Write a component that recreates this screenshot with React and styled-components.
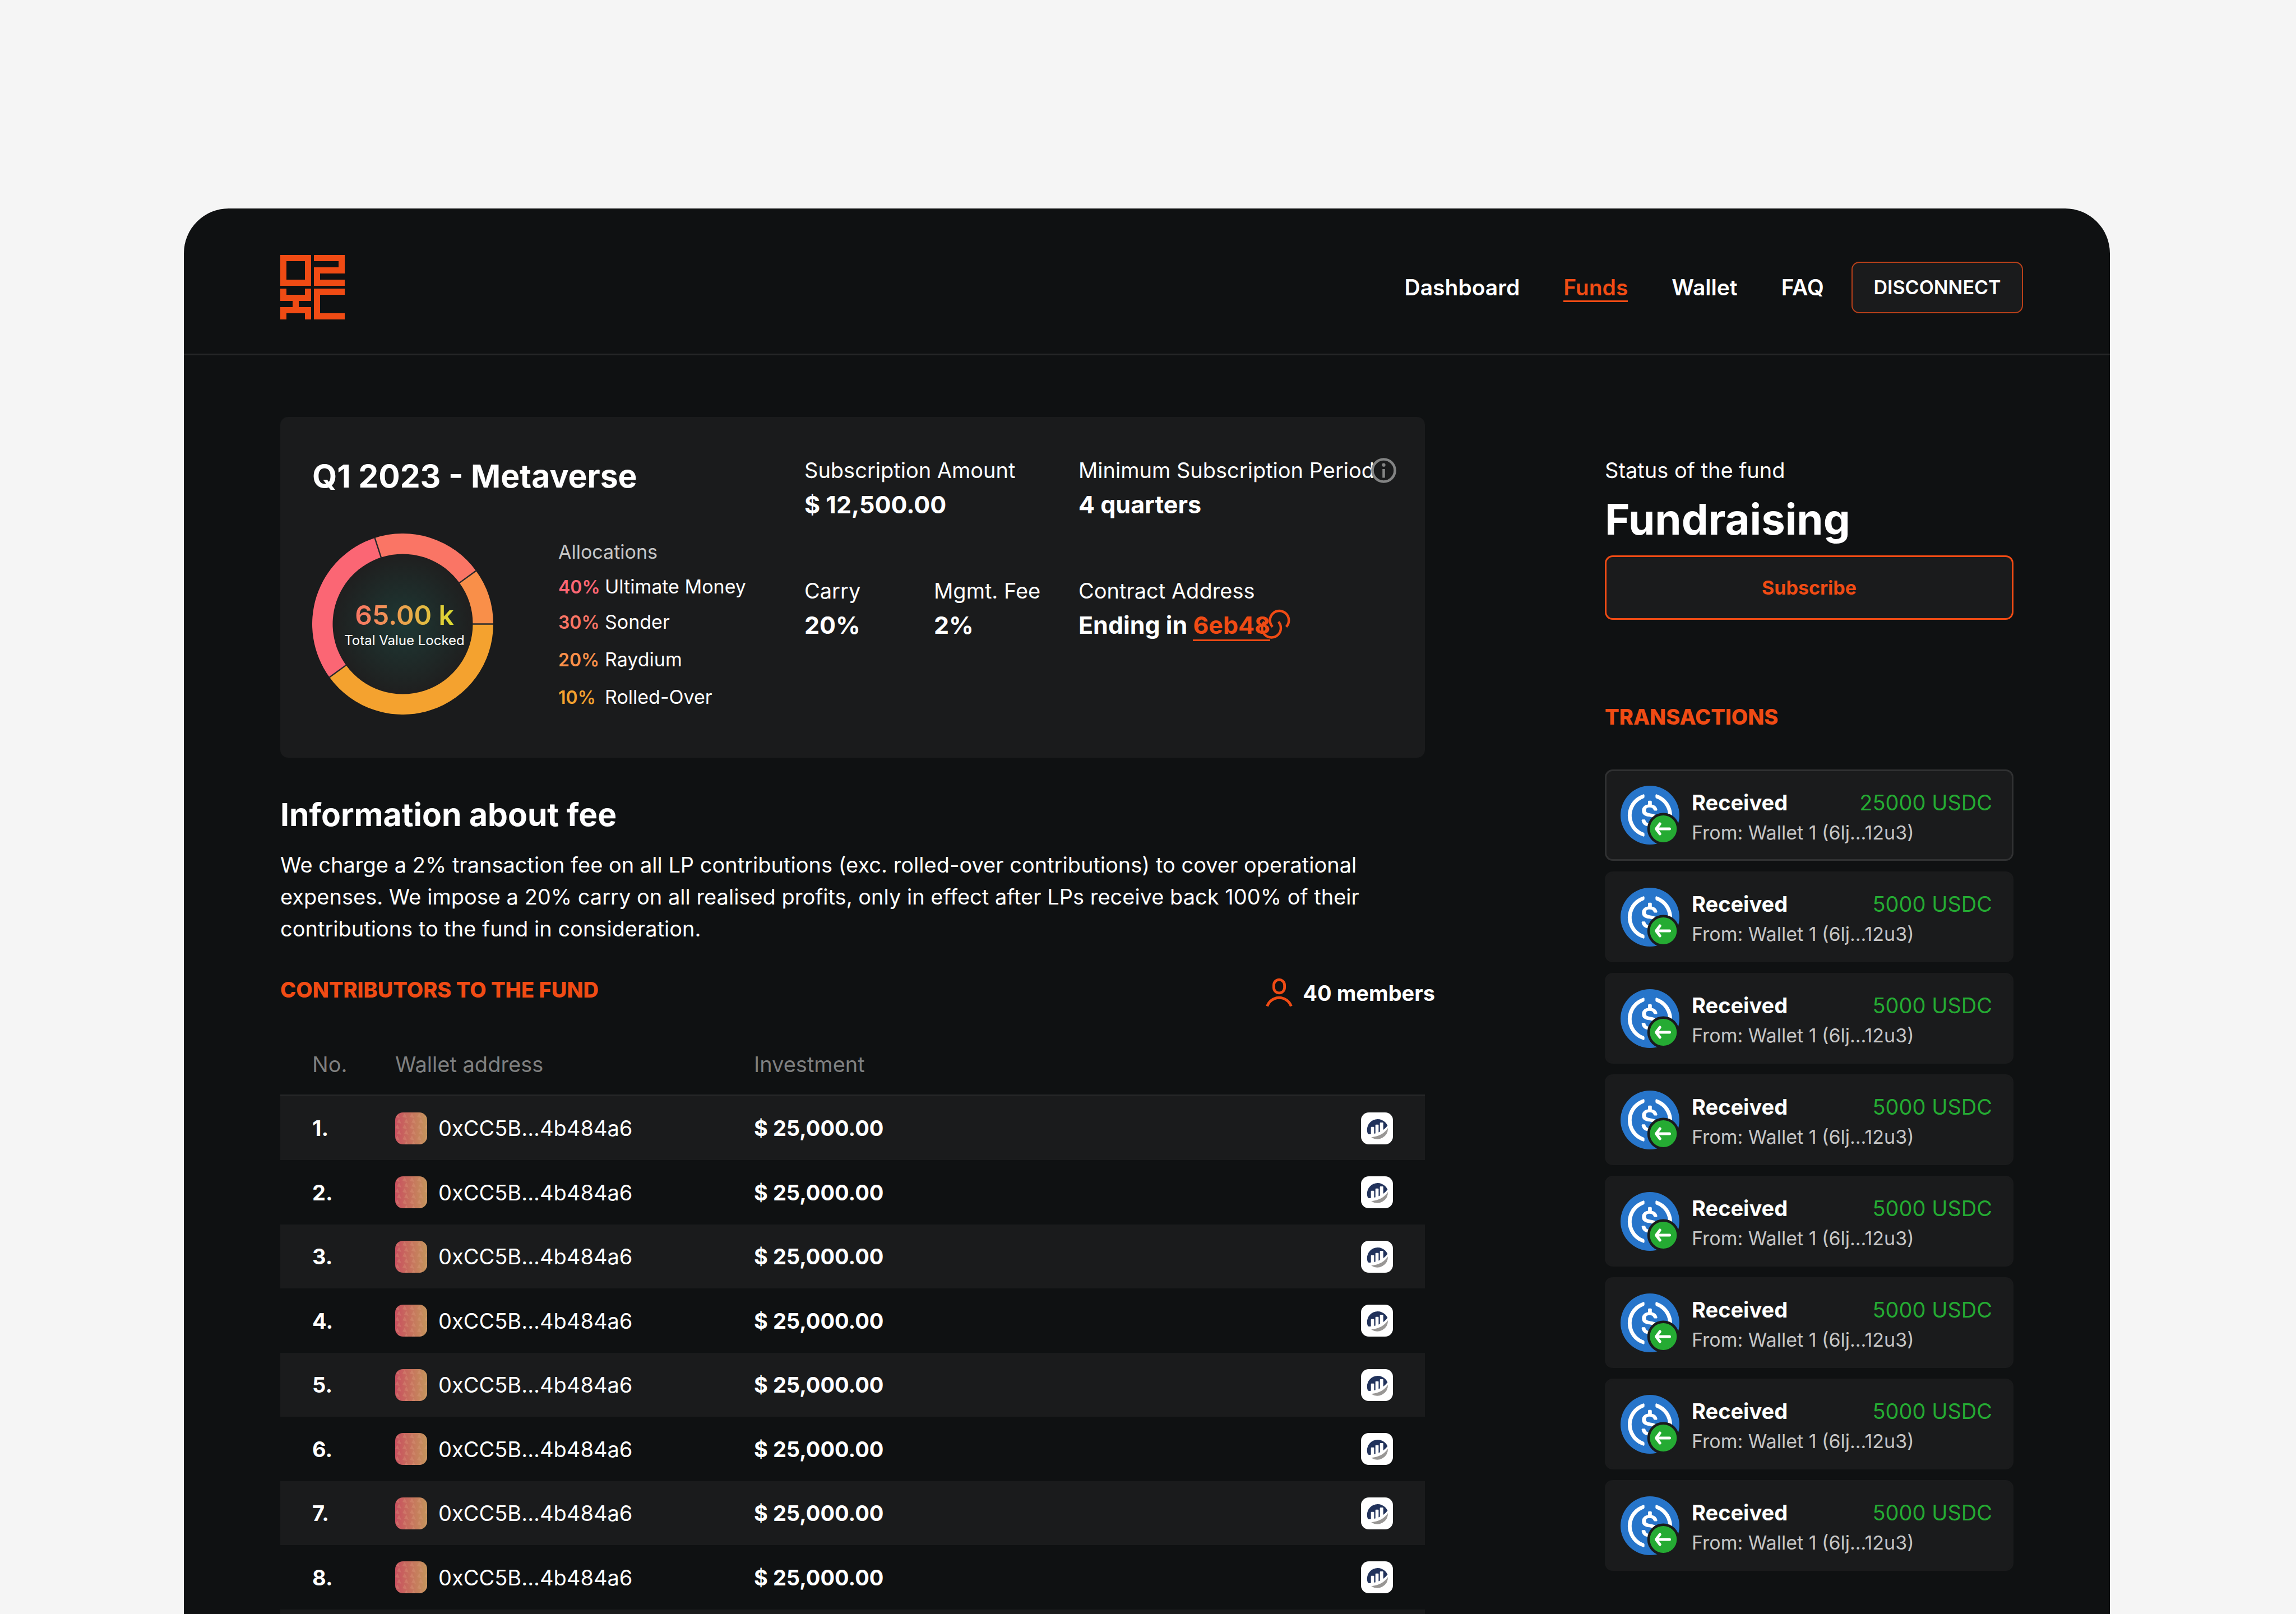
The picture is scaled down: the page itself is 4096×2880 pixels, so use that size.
import React from "react";
import styled, { createGlobalStyle, css } from "styled-components";

const color = {
  page: "#f5f5f5",
  base: "#0f1112",
  surface: "#1a1b1c",
  line: "#252627",
  outline: "#303132",
  accent: "#f04b14",
  text: "#ffffff",
  soft: "#c6c6c6",
  muted: "#7f8080",
  green: "#25ab33",
};

const GlobalStyle = createGlobalStyle`
  *, *::before, *::after { box-sizing: border-box; }
  body { margin: 0; background: ${color.page}; }
  h1, h2, h3, p, ul, dl, dd { margin: 0; padding: 0; }
  ul { list-style: none; }
`;

const Page = styled.div`
  height: 100vh;
  overflow: hidden;
  padding: 372px 332px 0 328px;
  background: ${color.page};
  color: ${color.text};
  font-family: Inter, "Liberation Sans", sans-serif;
  font-size: 38px;
  line-height: 46px;
`;

const Window = styled.div`
  min-height: 100vh;
  background: ${color.base};
  border-radius: 80px 80px 0 0;
`;

const Header = styled.header`
  display: flex;
  align-items: center;
  justify-content: space-between;
  padding: 83px 155px 61px 172px;
  border-bottom: 3px solid ${color.line};
`;

const LogoLink = styled.a`
  display: block;
  width: 115px;
  height: 115px;
`;

const HeaderActions = styled.div`
  display: flex;
  align-items: center;
  gap: 49px;
`;

const Nav = styled.nav`
  display: flex;
  gap: 78px;
`;

const NavLink = styled.a`
  font-size: 39px;
  font-weight: 600;
  line-height: 46px;
  color: ${(p) => (p.$active ? color.accent : color.text)};
  text-decoration: none;
  border-bottom: 3px solid ${(p) => (p.$active ? color.accent : "transparent")};
  border-top: 3px solid transparent;
`;

const buttonBase = css`
  font-family: inherit;
  font-size: 34px;
  line-height: 46px;
  background: ${color.surface};
  border-radius: 14px;
  cursor: pointer;
`;

const DisconnectButton = styled.button`
  ${buttonBase}
  min-width: 306px;
  height: 92px;
  padding: 0 36px;
  border: 2px solid #b8401a;
  font-weight: 600;
  color: ${color.text};
`;

const SubscribeButton = styled.button`
  ${buttonBase}
  width: 100%;
  height: 115px;
  margin-top: 19px;
  border: 3px solid ${color.accent};
  font-weight: 700;
  color: ${color.accent};
`;

const Main = styled.main`
  display: grid;
  grid-template-columns: minmax(0, 2042fr) minmax(0, 729fr);
  column-gap: 321px;
  padding: 110px 172px;
`;

const FundCard = styled.section`
  display: flex;
  padding: 71px 57px 77px;
  border-radius: 14px;
  background: ${color.surface};
`;

const Summary = styled.div`
  flex: 0 0 878px;
`;

const Heading = styled.h2`
  font-size: 57px;
  line-height: 69px;
  font-weight: 700;
`;

const ChartRow = styled.div`
  display: flex;
  gap: 116px;
  margin-top: 68px;
`;

const Donut = styled.figure`
  display: grid;
  place-items: center;
  width: 323px;
  height: 323px;
  margin: 0;
  & > * { grid-area: 1 / 1; }
`;

const DonutLabel = styled.figcaption`
  display: flex;
  flex-direction: column;
  align-items: center;
  padding: 8px 0 0 6px;
  white-space: nowrap;
`;

const DonutValue = styled.strong`
  font-size: 48px;
  line-height: 50px;
  font-weight: 600;
  color: transparent;
  background: linear-gradient(90deg, #fa7565 0%, #e8a84a 55%, #dcdc32 100%);
  background-clip: text;
  -webkit-background-clip: text;
`;

const DonutNote = styled.span`
  font-size: 24px;
  line-height: 40px;
`;

const Allocations = styled.div`
  padding-top: 10px;
  font-size: 34px;
`;

const AllocationsTitle = styled.h3`
  font-size: 34px;
  line-height: 46px;
  font-weight: 400;
  color: ${color.soft};
`;

const AllocationItem = styled.li`
  display: grid;
  grid-template-columns: 83px auto;
  align-items: baseline;
  margin-top: 16px;
  & + & + & { margin-top: 20px; }
`;

const Percent = styled.b`
  font-size: 32px;
  font-weight: 600;
  color: ${(p) => p.$tint};
`;

const Stats = styled.dl`
  flex: 1;
  display: grid;
  grid-template-columns: 231px 258px 1fr;
  align-content: start;
  row-gap: 101px;
`;

const Stat = styled.div`
  position: relative;
  grid-column: span ${(p) => p.$span || 1};
  display: flex;
  flex-direction: column;
  gap: 9px;
  white-space: nowrap;
`;

const StatLabel = styled.dt`
  line-height: 48px;
`;

const StatValue = styled.dd`
  font-size: 43px;
  line-height: 57px;
  font-weight: 700;
`;

const InfoButton = styled.button`
  position: absolute;
  top: 2px;
  left: 522px;
  display: block;
  width: 45px;
  height: 45px;
  padding: 0;
  border: 0;
  background: none;
`;

const AddressLink = styled.a`
  display: inline-block;
  line-height: 52px;
  color: ${color.accent};
  text-decoration: none;
  border-bottom: 3px solid ${color.accent};
`;

const ChainIcon = styled.svg`
  position: absolute;
  top: 57px;
  left: 325px;
  width: 54px;
  height: 54px;
`;

const FeeInfo = styled.section`
  margin-top: 67px;
`;

const FeeText = styled.p`
  margin-top: 27px;
  max-width: 1960px;
  line-height: 57px;
`;

const SectionBar = styled.div`
  display: flex;
  align-items: flex-start;
  justify-content: space-between;
  margin-top: 57px;
`;

const SectionTitle = styled.h2`
  font-size: 38px;
  line-height: 46px;
  font-weight: 800;
  color: ${color.accent};
`;

const Members = styled.p`
  display: flex;
  align-items: center;
  gap: 14px;
  height: 57px;
  margin-right: -18px;
  font-weight: 700;
`;

const Table = styled.table`
  width: 100%;
  margin-top: 45px;
  border-spacing: 0;
  table-layout: fixed;
`;

const Th = styled.th`
  height: 111px;
  padding: 0 0 0 ${(p) => (p.$first ? "57px" : "0")};
  border-bottom: 3px solid ${color.line};
  font-weight: 400;
  text-align: left;
  color: ${color.muted};
  width: ${(p) => p.$width || "auto"};
`;

const Row = styled.tr`
  height: 115px;
  &:nth-child(odd) {
    height: 114px;
    background: ${color.surface};
  }
`;

const Td = styled.td`
  padding: 0;
  font-weight: ${(p) => (p.$bold ? 700 : 400)};
  &:first-child { padding-left: 57px; }
  &:last-child { padding-right: 57px; }
`;

const Wallet = styled.span`
  display: flex;
  align-items: center;
  gap: 20px;
`;

const WalletTile = styled.svg`
  width: 57px;
  height: 57px;
  border-radius: 14px;
  background: linear-gradient(90deg, #c9505f, #c4955c);
`;

const ExplorerLink = styled.a`
  display: block;
  width: 57px;
  height: 57px;
  margin-left: auto;
  border-radius: 14px;
  background: #ffffff;
`;

const Aside = styled.aside`
  padding-top: 71px;
`;

const StatusLabel = styled.p`
  line-height: 48px;
`;

const Status = styled.h1`
  margin-top: 17px;
  font-size: 76px;
  line-height: 92px;
  font-weight: 700;
`;

const TransactionsTitle = styled(SectionTitle)`
  margin-top: 150px;
`;

const TransactionList = styled.ul`
  display: flex;
  flex-direction: column;
  gap: 19px;
  margin-top: 71px;
`;

const Transaction = styled.li`
  display: flex;
  align-items: center;
  gap: 22px;
  height: ${(p) => (p.$selected ? "163px" : "162px")};
  padding: 0 35px 0 25px;
  border: 3px solid ${(p) => (p.$selected ? color.outline : color.surface)};
  border-radius: 14px;
  background: ${color.surface};
`;

const TransactionBody = styled.div`
  flex: 1;
  display: grid;
  row-gap: 8px;
  padding-top: 8px;
`;

const TransactionTop = styled.div`
  display: flex;
  justify-content: space-between;
`;

const Kind = styled.b`
  font-weight: 700;
`;

const Amount = styled.span`
  color: ${color.green};
`;

const From = styled.p`
  font-size: 34px;
  color: ${color.soft};
`;

const Logo = () => (
  <svg viewBox="0 0 115 115" width="115" height="115" fill={color.accent} aria-hidden="true">
    <path fillRule="evenodd" d="M0 0H55V55H0ZM11 11V44H44V11Z" />
    <path d="M60 0H115V33H71V44H115V55H60V22H104V11H60Z" />
    <path d="M0 60H11V71H44V60H55V82H33V93H55V115H44V104H11V115H0V93H22V82H0Z" />
    <path d="M60 60H115V71H71V104H115V115H60Z" />
  </svg>
);

const point = (deg, r) => {
  const a = (deg * Math.PI) / 180;
  return `${(161.5 + r * Math.cos(a)).toFixed(2)} ${(161.5 + r * Math.sin(a)).toFixed(2)}`;
};

const ringSlice = (from, to) => {
  const large = to - from > 180 ? 1 : 0;
  return `M${point(from, 161.5)}A161.5 161.5 0 ${large} 1 ${point(to, 161.5)}L${point(to, 125)}A125 125 0 ${large} 0 ${point(from, 125)}Z`;
};

const slices = [
  { from: 0, to: 144, fill: "#f4a22f" },
  { from: 144, to: 252, fill: "#fb6674" },
  { from: 252, to: 324, fill: "#fa7565" },
  { from: 324, to: 360, fill: "#f98f49" },
];

const DonutChart = () => (
  <svg viewBox="0 0 323 323" width="323" height="323" aria-hidden="true">
    <defs>
      <radialGradient id="donut-glow">
        <stop offset="0" stopColor="#1e3834" />
        <stop offset="1" stopColor="#1f1f1f" />
      </radialGradient>
    </defs>
    <circle cx="161.5" cy="161.5" r="125" fill="url(#donut-glow)" />
    {slices.map((s) => (
      <path key={s.from} d={ringSlice(s.from, s.to)} fill={s.fill} />
    ))}
    {slices.map((s) => (
      <path key={s.from} d={`M${point(s.from, 124)}L${point(s.from, 162)}`} stroke="#26282c" strokeWidth="2.4" />
    ))}
  </svg>
);

const InfoIcon = () => (
  <svg viewBox="0 0 45 45" width="45" height="45" fill="none" stroke="#838484" strokeWidth="4.6" style={{ display: "block" }}>
    <circle cx="22.5" cy="22.5" r="20" />
    <path d="M22.5 20V35.5" />
    <circle cx="22.5" cy="12.7" r="3.1" fill="#838484" stroke="none" />
  </svg>
);

const PersonIcon = () => (
  <svg viewBox="0 0 57 57" width="57" height="57" fill="none" stroke={color.accent} strokeWidth="4.8" aria-hidden="true">
    <rect x="19.4" y="5.2" width="19.2" height="23.7" rx="9.6" />
    <path d="M7.6 52.6A22.6 22.6 0 0 1 50.4 52.6" />
  </svg>
);

const wedges = [];
for (let r = 0; r < 6; r += 1) {
  for (let c = 0; c < 5; c += 1) {
    wedges.push(`M${c * 13 + (r % 2) * 3} ${r * 10 + 8}l4 -7l4 9z`);
  }
}

const Tile = () => (
  <WalletTile viewBox="0 0 57 57" aria-hidden="true">
    <path d={wedges.join("")} fill="#e0a080" fillOpacity="0.3" />
  </WalletTile>
);

const ExplorerIcon = () => (
  <svg viewBox="0 0 57 57" width="57" height="57" style={{ display: "block" }} aria-hidden="true">
    <path d="M12.3 38.6A19 19 0 1 1 47.4 23.6Q37 37.5 15.5 39Z" fill="#21325b" />
    <path d="M17.7 26.7a1 1 0 0 1 1-1h3.7a1 1 0 0 1 1 1V40H17.7ZM25.7 22.7a1 1 0 0 1 1-1h3.7a1 1 0 0 1 1 1V38H25.7ZM33.7 19a1 1 0 0 1 1-1h4a1 1 0 0 1 1 1V33.5L33.7 37Z" fill="#fff" />
    <path d="M48 28A19 19 0 0 1 18.2 44.2Q38.5 42.5 48 28Z" fill="#999795" />
  </svg>
);

const CoinIcon = () => (
  <svg viewBox="0 0 105 105" width="105" height="105" aria-hidden="true">
    <g transform="scale(0.0525)">
      <circle cx="1000" cy="1000" r="1000" fill="#2775ca" />
      <path
        fill="#fff"
        d="M1275 1158.33c0-145.83-87.5-195.83-262.5-216.66-125-16.67-150-50-150-108.34s41.67-95.83 125-95.83c75 0 116.67 25 137.5 87.5 4.17 12.5 16.67 20.83 29.17 20.83h66.66c16.67 0 29.17-12.5 29.17-29.16v-4.17c-16.67-91.67-91.67-162.5-187.5-170.83v-100c0-16.67-12.5-29.17-33.33-33.34h-62.5c-16.67 0-29.17 12.5-33.34 33.34v95.83c-125 16.67-204.16 100-204.16 204.17 0 137.5 83.33 191.66 258.33 212.5 116.67 20.83 154.17 45.83 154.17 112.5s-58.34 112.5-137.5 112.5c-108.34 0-145.84-45.84-158.34-108.34-4.16-16.66-16.66-25-29.16-25h-70.84c-16.66 0-29.16 12.5-29.16 29.17v4.17c16.66 104.16 83.33 179.16 220.83 200v100c0 16.66 12.5 29.16 33.33 33.33h62.5c16.67 0 29.17-12.5 33.34-33.33v-100c125-20.84 208.33-108.34 208.33-220.84z"
      />
      <path
        fill="#fff"
        d="M787.5 1595.83c-325-116.66-491.67-479.16-370.83-800 62.5-175 200-308.33 370.83-370.83 16.67-8.33 25-20.83 25-41.67V325c0-16.67-8.33-29.17-25-33.33-4.17 0-12.5 0-16.67 4.16-395.83 125-612.5 545.84-487.5 941.67 75 233.33 254.17 412.5 487.5 487.5 16.67 8.33 33.34 0 37.5-16.67 4.17-4.16 4.17-8.33 4.17-16.66v-58.34c0-12.5-12.5-29.16-25-37.5zM1229.17 295.83c-16.67-8.33-33.34 0-37.5 16.67-4.17 4.17-4.17 8.33-4.17 16.67v58.33c0 16.67 12.5 33.33 25 41.67 325 116.66 491.67 479.16 370.83 800-62.5 175-200 308.33-370.83 370.83-16.67 8.33-25 20.83-25 41.67V1700c0 16.67 8.33 29.17 25 33.33 4.17 0 12.5 0 16.67-4.16 395.83-125 612.5-545.84 487.5-941.67-75-237.5-258.34-416.67-487.5-491.67z"
      />
    </g>
    <circle cx="76.3" cy="77" r="28.6" fill={color.surface} />
    <circle cx="76.3" cy="77" r="24" fill={color.green} />
    <path d="M87.5 77H64M70.3 68L63.5 77L70.3 86" fill="none" stroke="#fff" strokeWidth="5" strokeLinecap="round" strokeLinejoin="round" />
  </svg>
);

const navItems = ["Dashboard", "Funds", "Wallet", "FAQ"];

const allocations = [
  { percent: "40%", name: "Ultimate Money", tint: "#fb6674" },
  { percent: "30%", name: "Sonder", tint: "#fa7565" },
  { percent: "20%", name: "Raydium", tint: "#f98f49" },
  { percent: "10%", name: "Rolled-Over", tint: "#f4a22f" },
];

const contributors = Array.from({ length: 8 }, (_, i) => ({
  no: `${i + 1}.`,
  wallet: "0xCC5B...4b484a6",
  investment: "$ 25,000.00",
}));

const transactions = ["25000", "5000", "5000", "5000", "5000", "5000", "5000", "5000"];

export default function App() {
  return (
    <Page>
      <GlobalStyle />
      <Window>
        <Header>
          <LogoLink href="#home" aria-label="Home">
            <Logo />
          </LogoLink>
          <HeaderActions>
            <Nav>
              {navItems.map((item) => (
                <NavLink key={item} href={`#${item.toLowerCase()}`} $active={item === "Funds"}>
                  {item}
                </NavLink>
              ))}
            </Nav>
            <DisconnectButton type="button">DISCONNECT</DisconnectButton>
          </HeaderActions>
        </Header>

        <Main>
          <div>
            <FundCard>
              <Summary>
                <Heading>Q1 2023 - Metaverse</Heading>
                <ChartRow>
                  <Donut>
                    <DonutChart />
                    <DonutLabel>
                      <DonutValue>65.00 k</DonutValue>
                      <DonutNote>Total Value Locked</DonutNote>
                    </DonutLabel>
                  </Donut>
                  <Allocations>
                    <AllocationsTitle>Allocations</AllocationsTitle>
                    <ul>
                      {allocations.map((a) => (
                        <AllocationItem key={a.name}>
                          <Percent $tint={a.tint}>{a.percent}</Percent>
                          <span>{a.name}</span>
                        </AllocationItem>
                      ))}
                    </ul>
                  </Allocations>
                </ChartRow>
              </Summary>
              <Stats>
                <Stat $span={2}>
                  <StatLabel>Subscription Amount</StatLabel>
                  <StatValue>$ 12,500.00</StatValue>
                </Stat>
                <Stat>
                  <StatLabel>
                    Minimum Subscription Period
                    <InfoButton type="button" aria-label="About the subscription period">
                      <InfoIcon />
                    </InfoButton>
                  </StatLabel>
                  <StatValue>4 quarters</StatValue>
                </Stat>
                <Stat>
                  <StatLabel>Carry</StatLabel>
                  <StatValue>20%</StatValue>
                </Stat>
                <Stat>
                  <StatLabel>Mgmt. Fee</StatLabel>
                  <StatValue>2%</StatValue>
                </Stat>
                <Stat>
                  <StatLabel>Contract Address</StatLabel>
                  <StatValue>
                    Ending in <AddressLink href="#contract">6eb48</AddressLink>
                    <ChainIcon viewBox="0 0 54 54" fill="none" stroke={color.accent} strokeWidth="4.4" aria-hidden="true">
                      <path d="M21.2 31.4A16.8 16.8 0 1 1 45.6 31.4" />
                      <path d="M31.6 22.4A16.8 16.8 0 1 1 6.8 22.4" />
                    </ChainIcon>
                  </StatValue>
                </Stat>
              </Stats>
            </FundCard>

            <FeeInfo>
              <Heading>Information about fee</Heading>
              <FeeText>
                We charge a 2% transaction fee on all LP contributions (exc. rolled-over contributions) to cover
                operational expenses. We impose a 20% carry on all realised profits, only in effect after LPs receive
                back 100% of their contributions to the fund in consideration.
              </FeeText>
            </FeeInfo>

            <SectionBar>
              <SectionTitle>CONTRIBUTORS TO THE FUND</SectionTitle>
              <Members>
                <PersonIcon />
                40 members
              </Members>
            </SectionBar>

            <Table>
              <thead>
                <tr>
                  <Th $first $width="205px">No.</Th>
                  <Th $width="640px">Wallet address</Th>
                  <Th>Investment</Th>
                  <Th $width="200px" aria-label="Explorer" />
                </tr>
              </thead>
              <tbody>
                {contributors.map((c) => (
                  <Row key={c.no}>
                    <Td $bold>{c.no}</Td>
                    <Td>
                      <Wallet>
                        <Tile />
                        {c.wallet}
                      </Wallet>
                    </Td>
                    <Td $bold>{c.investment}</Td>
                    <Td>
                      <ExplorerLink href="#explorer" aria-label="Open in explorer">
                        <ExplorerIcon />
                      </ExplorerLink>
                    </Td>
                  </Row>
                ))}
                <Row>
                  <Td colSpan={4} />
                </Row>
              </tbody>
            </Table>
          </div>

          <Aside>
            <StatusLabel>Status of the fund</StatusLabel>
            <Status>Fundraising</Status>
            <SubscribeButton type="button">Subscribe</SubscribeButton>
            <TransactionsTitle>TRANSACTIONS</TransactionsTitle>
            <TransactionList>
              {transactions.map((amount, i) => (
                <Transaction key={i} $selected={i === 0}>
                  <CoinIcon />
                  <TransactionBody>
                    <TransactionTop>
                      <Kind>Received</Kind>
                      <Amount>{amount} USDC</Amount>
                    </TransactionTop>
                    <From>From: Wallet 1 (6lj...12u3)</From>
                  </TransactionBody>
                </Transaction>
              ))}
            </TransactionList>
          </Aside>
        </Main>
      </Window>
    </Page>
  );
}
